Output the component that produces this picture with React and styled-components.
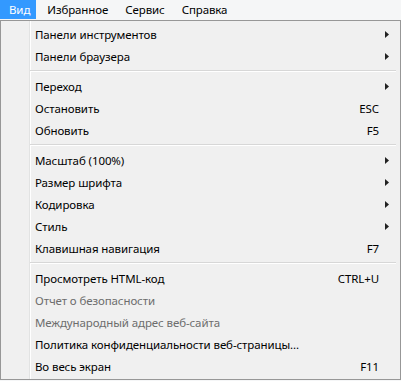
import React from "react";
import styled, { createGlobalStyle } from "styled-components";

const GlobalStyle = createGlobalStyle`
  html, body { margin: 0; padding: 0; background: #f5f6f7; }
  body {
    font-family: "Noto Sans", "Open Sans", sans-serif;
    font-size: 11.5px;
    letter-spacing: -0.1px;
    color: #000;
  }
`;

const Page = styled.div`
  width: 401px;
  height: 381px;
  display: flex;
  flex-direction: column;
  background: #f5f6f7;
`;

const MenuBar = styled.div`
  display: flex;
  height: 20px;
  align-items: stretch;
`;

const BarItem = styled.div`
  display: flex;
  align-items: center;
  padding: 0 6px 1px 9px;
  margin-right: 2px;
  height: 19px;
  box-sizing: border-box;
  background: ${(p) => (p.$active ? "#3399ff" : "transparent")};
  color: ${(p) => (p.$active ? "#fff" : "#000")};
`;

const Dropdown = styled.div`
  width: 401px;
  box-sizing: border-box;
  border: 1px solid #979797;
  padding: 2px;
  background:
    linear-gradient(to right, transparent 0 28px, #e2e3e3 28px 29px, #ffffff 29px 30px, transparent 30px),
    #f0f0f0;
  display: flex;
  flex-direction: column;
`;

const Row = styled.div`
  display: grid;
  grid-template-columns: 1fr auto 19px;
  align-items: center;
  height: 22px;
  padding-left: 32px;
  color: ${(p) => (p.$disabled ? "#6d6d6d" : "#000")};
  white-space: nowrap;
`;

const Label = styled.span``;

const Shortcut = styled.span`
  text-align: right;
`;

const ArrowCell = styled.span`
  display: flex;
  align-items: center;
  padding-left: 6px;
`;

const Separator = styled.div`
  height: 8px;
  margin: 0 2px 0 27px;
  display: flex;
  flex-direction: column;
  justify-content: center;
  &::before {
    content: "";
    display: block;
    height: 1px;
    background: #d7d7d7;
  }
  &::after {
    content: "";
    display: block;
    height: 1px;
    background: #ffffff;
  }
`;

const Arrow = () => (
  <svg width="4" height="7" viewBox="0 0 4 7">
    <polygon points="0,0 4,3.5 0,7" fill="#222" />
  </svg>
);

const groups = [
  [
    { label: "Панели инструментов", sub: true },
    { label: "Панели браузера", sub: true },
  ],
  [
    { label: "Переход", sub: true },
    { label: "Остановить", key: "ESC" },
    { label: "Обновить", key: "F5" },
  ],
  [
    { label: "Масштаб (100%)", sub: true },
    { label: "Размер шрифта", sub: true },
    { label: "Кодировка", sub: true },
    { label: "Стиль", sub: true },
    { label: "Клавишная навигация", key: "F7" },
  ],
  [
    { label: "Просмотреть HTML-код", key: "CTRL+U" },
    { label: "Отчет о безопасности", disabled: true },
    { label: "Международный адрес веб-сайта", disabled: true },
    { label: "Политика конфиденциальности веб-страницы..." },
    { label: "Во весь экран", key: "F11" },
  ],
];

export default function App() {
  return (
    <Page>
      <GlobalStyle />
      <MenuBar>
        <BarItem $active>Вид</BarItem>
        <BarItem>Избранное</BarItem>
        <BarItem>Сервис</BarItem>
        <BarItem>Справка</BarItem>
      </MenuBar>
      <Dropdown>
        {groups.map((g, gi) => (
          <React.Fragment key={gi}>
            {gi > 0 && <Separator />}
            {g.map((it) => (
              <Row key={it.label} $disabled={it.disabled}>
                <Label>{it.label}</Label>
                <Shortcut>{it.key || ""}</Shortcut>
                <ArrowCell>{it.sub && <Arrow />}</ArrowCell>
              </Row>
            ))}
          </React.Fragment>
        ))}
      </Dropdown>
    </Page>
  );
}
